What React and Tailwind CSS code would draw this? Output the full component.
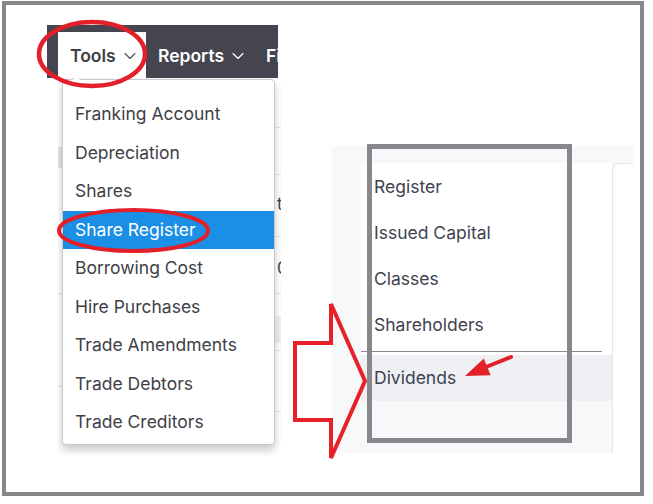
import { ChevronDown } from "lucide-react";

const toolItems = [
  "Franking Account",
  "Depreciation",
  "Shares",
  "Share Register",
  "Borrowing Cost",
  "Hire Purchases",
  "Trade Amendments",
  "Trade Debtors",
  "Trade Creditors"
];

const registerItems = ["Register", "Issued Capital", "Classes", "Shareholders"];

const font = { fontFamily: "Inter, 'Noto Sans', sans-serif" };

const Annotations = () => (
  <svg
    className="pointer-events-none absolute left-0 top-0"
    width="653"
    height="504"
    viewBox="0 0 653 504"
    fill="none"
  >
    <ellipse cx="92" cy="54" rx="53" ry="32" stroke="#e3202a" strokeWidth="4.5" />
    <ellipse cx="133.5" cy="230.5" rx="74.5" ry="20.5" stroke="#e3202a" strokeWidth="4" />
    <polygon
      points="295,343 331,343 331,304 365,381 331,458 331,420 295,420"
      stroke="#e8202a"
      strokeWidth="4"
      strokeLinejoin="miter"
    />
    <rect x="369.5" y="146.5" width="200" height="294" stroke="#88888c" strokeWidth="5" />
    <line x1="511" y1="357" x2="486" y2="367" stroke="#e3202a" strokeWidth="4" strokeLinecap="round" />
    <polygon points="465,376 483.8,358.6 490.6,375.2" fill="#e3202a" />
  </svg>
);

const ToolsMenu = () => (
  <div className="ml-[41px] mt-[20px] flex w-[234px] flex-col">
    <nav className="flex h-[53px] w-[231px] items-end overflow-hidden bg-[#45454f]">
      <div className="ml-[11px] flex h-[46px] w-[88px] shrink-0 items-center gap-[4px] bg-white pl-[12px] pt-[2px] text-[17.5px] font-semibold text-[#3f3f46]">
        Tools
        <ChevronDown size={20} strokeWidth={1.4} className="text-[#52525b]" />
      </div>
      <div className="ml-[12px] flex h-[46px] shrink-0 items-center gap-[4px] pt-[2px] text-[17.5px] font-semibold text-white">
        Reports
        <ChevronDown size={20} strokeWidth={1.4} />
      </div>
      <div className="ml-[18px] flex h-[46px] shrink-0 items-center pt-[2px] text-[17.5px] font-semibold text-white">
        Fi
      </div>
    </nav>

    <div className="ml-[11px] flex h-[378px] w-[223px] overflow-hidden bg-white">
      <div className="flex w-[4px] shrink-0 flex-col">
        <div className="mt-[69px] h-[21px] bg-[#e4e4e7]" />
        <div className="mt-[125px] h-px bg-[#e4e4e7]" />
        <div className="mt-[92px] h-px bg-[#e4e4e7]" />
      </div>

      <div className="relative mt-[1px] h-[366px] w-[213px] shrink-0 rounded-[4px] border border-[#c9c9cc] bg-white pt-[15px] text-[17.5px] text-[#404048] shadow-[0_5px_9px_rgba(0,0,0,0.22)]">
        <div className="absolute -top-[4px] left-[10px] h-[7px] w-[7px] rotate-45 border-l border-t border-[#c9c9cc] bg-white" />
        {toolItems.map((item) => (
          <div
            key={item}
            className={`flex h-[38.5px] items-center pl-[12px] ${
              item === "Share Register" ? "bg-[#1b8fe6] text-white" : ""
            }`}
          >
            {item}
          </div>
        ))}
      </div>

      <div className="flex w-[6px] shrink-0 flex-col text-[17px] text-[#3f3f46]">
        <div className="mt-[49px] h-px bg-[#e4e4e7]" />
        <div className="mt-[46px] h-px bg-[#e4e4e7]" />
        <div className="mt-[19px] h-[20px] pl-[2px] leading-[20px]">t</div>
        <div className="mt-[22px] h-px bg-[#e4e4e7]" />
        <div className="mt-[21px] h-[20px] pl-[2px] leading-[20px]">0,</div>
        <div className="mt-[15px] h-px bg-[#e4e4e7]" />
        <div className="mt-[22px] h-[27px] bg-[#f1f1f3]" />
        <div className="mt-[7px] h-px bg-[#e4e4e7]" />
        <div className="mt-[60px] h-px bg-[#e4e4e7]" />
      </div>
    </div>
  </div>
);

const RegisterMenu = () => (
  <div className="ml-[51px] mt-[141px] flex h-[307px] w-[301px] flex-col bg-[#f7f8fa] pt-[17px]">
    <div className="flex flex-1">
      <div className="ml-[29px] flex w-[251px] flex-col text-[17.5px] text-[#3f4250]">
        <div className="bg-white pt-[1px]">
          {registerItems.map((item) => (
            <div key={item} className="flex h-[46px] items-center pl-[13px]">
              {item}
            </div>
          ))}
          <div className="pb-[3px] pt-[3px]">
            <div className="h-px w-[241px] bg-[#8b8b8f]" />
          </div>
        </div>
        <div className="flex h-[46px] items-center bg-[#eef0f3] pl-[13px]">Dividends</div>
      </div>
      <div className="w-[21px] rounded-tl-[8px] border-l border-t border-[#e6e7ea] bg-white" />
    </div>
  </div>
);

export default function App() {
  return (
    <div className="relative h-[504px] w-[653px] overflow-hidden bg-white" style={font}>
      <div className="ml-[2px] mt-[1px] flex h-[495px] w-[642px] items-start border-[4px] border-[#88888c] bg-white">
        <ToolsMenu />
        <RegisterMenu />
      </div>
      <Annotations />
    </div>
  );
}
